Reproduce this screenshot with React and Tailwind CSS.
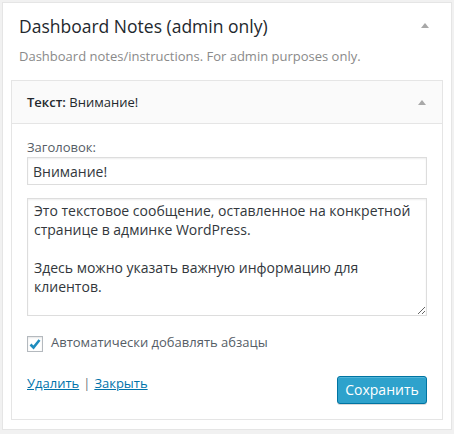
const Arrow = ({ className = '' }) => (
  <svg width="8" height="5" viewBox="0 0 8 5" className={className}>
    <polygon points="4,0 8,5 0,5" fill="#a8a8a8" />
  </svg>
);

const App = () => {
  const font = { fontFamily: '"Open Sans", "Noto Sans", sans-serif' };

  return (
    <div className="h-[434px] w-[454px] bg-[#f1f1f1] p-[2px]" style={font}>
      <div className="border border-[#e5e5e5] bg-white px-[8px] pb-[9px] pt-[11px]">
        <div className="flex items-center justify-between pl-[8px] pr-[14px]">
          <h2 className="text-[17.5px] leading-[24px] text-[#23282d]">Dashboard Notes (admin only)</h2>
          <Arrow className="mt-[-2px]" />
        </div>
        <p className="mt-[8px] pl-[8px] text-[13px] leading-[20px] text-[#8a8a8a]">
          Dashboard notes/instructions. For admin purposes only.
        </p>

        <div className="mt-[14px] border border-[#e5e5e5]">
          <div className="flex h-[43px] items-center justify-between border-b border-[#e5e5e5] bg-[#fafafa] pl-[15px] pr-[16px]">
            <h3 className="text-[13px] leading-[18px] text-[#23282d]">
              <span className="font-semibold">Текст:</span> Внимание!
            </h3>
            <Arrow />
          </div>

          <div className="px-[15px] pb-[15px] pt-[14px]">
            <label className="block text-[13px] leading-[18px] text-[#555d66]">Заголовок:</label>
            <input
              type="text"
              defaultValue="Внимание!"
              className="mt-[1px] block h-[28px] w-full border border-[#ddd] px-[5px] text-[14px] text-[#32373c] shadow-[inset_0_1px_2px_rgba(0,0,0,0.07)] outline-none"
              style={font}
            />
            <textarea
              rows={6}
              defaultValue={'Это текстовое сообщение, оставленное на конкретной странице в админке WordPress.\n\nЗдесь можно указать важную информацию для клиентов.'}
              className="mt-[13px] block h-[118px] w-full border border-[#ddd] px-[6px] py-[2px] text-[14px] leading-[19px] text-[#32373c] shadow-[inset_0_1px_2px_rgba(0,0,0,0.07)] outline-none"
              style={font}
            />

            <div className="mt-[20px] flex h-[16px] items-center gap-[8px]">
              <div className="flex h-[16px] w-[16px] items-center justify-center border border-[#b4b9be] bg-white shadow-[inset_0_1px_2px_rgba(0,0,0,0.1)]">
                <svg width="14" height="14" viewBox="0 0 14 14">
                  <polyline points="2.5,7.5 5.5,10.5 11.5,3" fill="none" stroke="#1e8cbe" strokeWidth="2.6" />
                </svg>
              </div>
              <span className="mt-[-4px] text-[13px] leading-[20px] text-[#555d66]">Автоматически добавлять абзацы</span>
            </div>

            <div className="mt-[21px] flex items-start justify-between">
              <div className="text-[13px] leading-[20px]">
                <a href="#" className="text-[#0073aa] underline">Удалить</a>
                <span className="mx-[4px] text-[#72777c]">|</span>
                <a href="#" className="text-[#0073aa] underline">Закрыть</a>
              </div>
              <button className="mt-[3px] h-[28px] w-[90px] rounded-[3px] border border-[#0074a2] bg-[#2ea2cc] text-[14px] leading-[26px] text-white shadow-[inset_0_1px_0_rgba(120,200,230,0.5),0_1px_0_rgba(0,0,0,0.15)]">
                Сохранить
              </button>
            </div>
          </div>
        </div>
      </div>
    </div>
  );
};

export default App;
